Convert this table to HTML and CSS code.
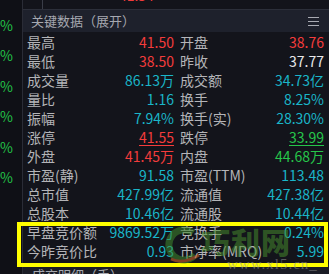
FILE: index.html
```html
<!DOCTYPE html>
<html lang="zh">
<head>
<meta charset="utf-8">
<link rel="stylesheet" href="styles.css">
</head>
<body>
<div class="app">
  <div class="side">
    <span class="pct">%</span>
    <span class="pct">%</span>
    <span class="pct">%</span>
    <span class="pct">%</span>
    <span class="pct">%</span>
    <span class="pct">%</span>
    <span class="pct">%</span>
  </div>
  <div class="panel">
    <div class="topline">
      <span class="tl-a"></span>
      <span class="tl-b">'</span>
      <span class="tl-red">41.54</span>
      <span class="tl-cy">11</span>
    </div>
    <div class="hdr">
      <span class="hdr-title">关键数据（展开）</span>
      <svg class="menu" width="12" height="9" viewBox="0 0 12 9"><path d="M0 0.5H11M0 4.5H11M0 8.5H11" stroke="#a9abb3" stroke-width="1.2" fill="none"/></svg>
    </div>
    <div class="grid">
      <div class="cell"><span class="lab">最高</span><span class="val red">41.50</span></div>
      <div class="cell"><span class="lab">开盘</span><span class="val red">38.76</span></div>
      <div class="cell"><span class="lab">最低</span><span class="val red">38.50</span></div>
      <div class="cell"><span class="lab">昨收</span><span class="val wht">37.77</span></div>
      <div class="cell"><span class="lab">成交量</span><span class="val cy">86.13万</span></div>
      <div class="cell"><span class="lab">成交额</span><span class="val cy">34.73亿</span></div>
      <div class="cell"><span class="lab">量比</span><span class="val cy">1.16</span></div>
      <div class="cell"><span class="lab">换手</span><span class="val cy">8.25%</span></div>
      <div class="cell"><span class="lab">振幅</span><span class="val cy">7.94%</span></div>
      <div class="cell"><span class="lab">换手(实)</span><span class="val cy">28.30%</span></div>
      <div class="cell"><span class="lab">涨停</span><span class="val red ul">41.55</span></div>
      <div class="cell"><span class="lab">跌停</span><span class="val grn ul">33.99</span></div>
      <div class="cell"><span class="lab">外盘</span><span class="val red">41.45万</span></div>
      <div class="cell"><span class="lab">内盘</span><span class="val grn">44.68万</span></div>
      <div class="cell"><span class="lab">市盈(静)</span><span class="val cy">91.58</span></div>
      <div class="cell"><span class="lab">市盈(TTM)</span><span class="val cy">113.48</span></div>
      <div class="cell"><span class="lab">总市值</span><span class="val cy">427.99亿</span></div>
      <div class="cell"><span class="lab">流通值</span><span class="val cy">427.38亿</span></div>
      <div class="cell"><span class="lab">总股本</span><span class="val cy">10.46亿</span></div>
      <div class="cell"><span class="lab">流通股</span><span class="val cy">10.44亿</span></div>
      <div class="cell"><span class="lab">早盘竞价额</span><span class="val cy">9869.52万</span></div>
      <div class="cell"><span class="lab">竞换手</span><span class="val cy">0.24%</span></div>
      <div class="cell"><span class="lab">今昨竞价比</span><span class="val cy">0.93</span></div>
      <div class="cell"><span class="lab">市净率(MRQ)</span><span class="val cy">5.99</span></div>
    </div>
    <div class="hdr2">成交明细（手）</div>
  </div>
  <div class="hl"></div>
  <div class="wm">
    <svg class="wm-logo" width="36" height="40" viewBox="0 0 36 40">
      <path d="M28 8 A15 15 0 1 0 30 30" stroke="#3f8a2c" stroke-width="7" fill="none"/>
      <path d="M6 34 Q18 40 34 30" stroke="#d9642a" stroke-width="3" fill="none"/>
    </svg>
    <span class="wm-cn">巧利网</span>
    <span class="wm-url">www.xl5.cn_</span>
  </div>
</div>
</body>
</html>
```
FILE: styles.css
```css
* { box-sizing: border-box; }
html, body { margin: 0; padding: 0; }
body {
  width: 329px;
  height: 274px;
  overflow: hidden;
  background: #0f1016;
  font-family: "Noto Sans CJK SC", "Noto Sans", sans-serif;
}
.app {
  position: relative;
  display: flex;
  width: 329px;
  height: 274px;
  overflow: hidden;
}
.side {
  width: 22px;
  flex: none;
  display: flex;
  flex-direction: column;
  gap: 16.5px;
  padding-top: 4px;
  margin-top: -17px;
  background: #0f1016;
}
.pct {
  color: #22c247;
  font-size: 14px;
  line-height: 14px;
  height: 14px;
}
.panel {
  flex: 1;
  background: #13141b;
  border-left: 1px solid #2a2c36;
  display: flex;
  flex-direction: column;
}
.topline {
  height: 10px;
  flex: none;
  position: relative;
  overflow: hidden;
  display: flex;
  align-items: flex-end;
  border-bottom: 1px solid #2c2f3a;
  font-size: 14px;
  line-height: 14px;
}
.tl-a {
  width: 20px;
  height: 10px;
  border-right: 1px solid #3a3d48;
  flex: none;
}
.tl-b { color: #ddd; margin-left: 8px; transform: translateY(-6px); }
.tl-red { color: #f23b3b; margin-left: 64px; transform: translateY(-7px); }
.tl-cy { color: #19b6c8; margin-left: 56px; transform: translateY(-8px); font-weight: bold; }
.hdr {
  height: 22px;
  flex: none;
  background: #1e212c;
  display: flex;
  align-items: center;
  justify-content: space-between;
  padding: 0 9px 0 8px;
}
.hdr-title {
  color: #a6a8b0;
  font-size: 13px;
  line-height: 22px;
}
.menu { display: block; }
.grid {
  display: grid;
  grid-template-columns: 147px 144px;
  column-gap: 6px;
  grid-auto-rows: 19px;
  padding: 1px 0 0 4px;
}
.cell {
  display: flex;
  justify-content: space-between;
  align-items: center;
  font-size: 14px;
  line-height: 19px;
  white-space: nowrap;
}
.lab { color: #b4b4b8; }
.val { text-align: right; }
.red { color: #f43c3c; }
.wht { color: #e8e8ea; }
.cy { color: #1ab5c8; }
.grn { color: #26c54a; }
.ul { text-decoration: underline; text-underline-offset: 2px; }
.hdr2 {
  margin-top: 3px;
  height: 22px;
  background: #1a1c25;
  color: #a6a8b0;
  font-size: 13px;
  line-height: 22px;
  padding-left: 9px;
}
.hl {
  position: absolute;
  left: 17px;
  top: 222px;
  width: 311px;
  height: 45px;
  border: 4px solid #ffff00;
  pointer-events: none;
}
.wm {
  position: absolute;
  left: 165px;
  top: 222px;
  width: 160px;
  height: 52px;
  pointer-events: none;
}
.wm-logo {
  position: absolute;
  left: 0;
  top: 3px;
  opacity: 0.55;
}
.wm-cn {
  position: absolute;
  left: 36px;
  top: -2px;
  font-size: 29px;
  font-weight: 900;
  letter-spacing: 1px;
  color: rgba(70, 140, 45, 0.55);
}
.wm-url {
  position: absolute;
  left: 62px;
  top: 34px;
  font-family: "Liberation Serif", serif;
  font-size: 15px;
  letter-spacing: 1px;
  color: rgba(150, 150, 150, 0.55);
}
```
